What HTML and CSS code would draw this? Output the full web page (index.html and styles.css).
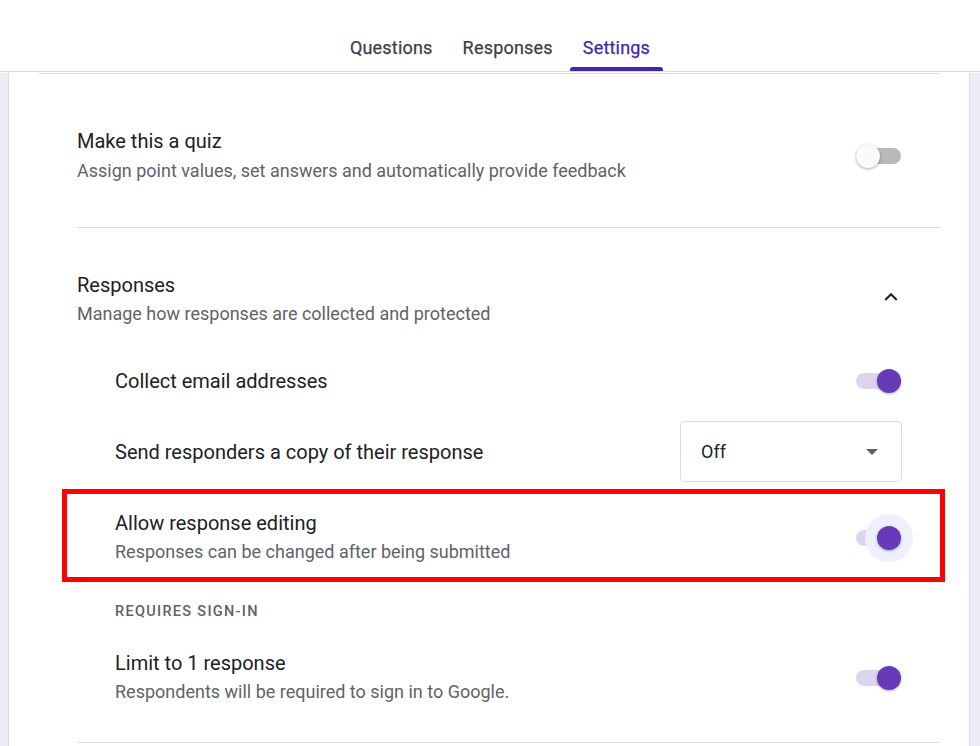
FILE: index.html
```html
<!DOCTYPE html>
<html>
<head>
<meta charset="utf-8">
<link rel="stylesheet" href="styles.css">
</head>
<body>
<header class="topbar">
  <nav class="tabs">
    <div class="tab">Questions</div>
    <div class="tab">Responses</div>
    <div class="tab active">Settings</div>
  </nav>
</header>
<main class="page">
  <div class="card">
    <div class="top-rule"></div>
    <section class="section quiz">
      <div class="row">
        <div class="text">
          <div class="title">Make this a quiz</div>
          <div class="sub">Assign point values, set answers and automatically provide feedback</div>
        </div>
        <span class="toggle off"><span class="thumb"></span></span>
      </div>
    </section>
    <section class="section responses">
      <div class="row head">
        <div class="text">
          <div class="title">Responses</div>
          <div class="sub sub-tight">Manage how responses are collected and protected</div>
        </div>
        <svg class="chevron" width="26" height="26" viewBox="0 0 24 24"><path d="M7.41 15.41 12 10.83l4.59 4.58L18 14l-6-6-6 6z" fill="#202124"/></svg>
      </div>
      <div class="subrow collect">
        <div class="title">Collect email addresses</div>
        <span class="toggle on"><span class="thumb"></span></span>
      </div>
      <div class="subrow send">
        <div class="title">Send responders a copy of their response</div>
        <div class="select">
          <span class="select-value">Off</span>
          <span class="select-arrow"></span>
        </div>
      </div>
      <div class="highlight">
        <div class="text">
          <div class="title">Allow response editing</div>
          <div class="sub sub-tight">Responses can be changed after being submitted</div>
        </div>
        <span class="toggle on focused"><span class="halo"></span><span class="thumb"></span></span>
      </div>
      <div class="label">REQUIRES SIGN-IN</div>
      <div class="subrow limit">
        <div class="text">
          <div class="title">Limit to 1 response</div>
          <div class="sub sub-tight">Respondents will be required to sign in to Google.</div>
        </div>
        <span class="toggle on"><span class="thumb"></span></span>
      </div>
    </section>
  </div>
</main>
</body>
</html>
```

FILE: styles.css
```css
* { box-sizing: border-box; }

html, body {
  margin: 0;
  padding: 0;
  background: #ffffff;
  font-family: Roboto, "Noto Sans", Arial, sans-serif;
  color: #202124;
  overflow: hidden;
}

.topbar {
  height: 72px;
  border-bottom: 1px solid #dadce0;
  background: #fff;
  display: flex;
  justify-content: center;
  align-items: flex-end;
}

.tabs {
  display: flex;
  gap: 4px;
  margin-left: 20px;
  height: 100%;
  align-items: stretch;
}

.tab {
  position: relative;
  display: flex;
  align-items: center;
  padding: 24px 13px 0;
  font-size: 18px;
  font-weight: 400;
  color: #3c4043;
  letter-spacing: 0.2px;
  -webkit-text-stroke: 0.25px currentColor;
}

.tab.active {
  color: #4527a0;
}

.tab.active::after {
  content: "";
  position: absolute;
  left: 0;
  right: 0;
  bottom: 0;
  height: 4px;
  background: #4527a0;
  border-radius: 3px 3px 0 0;
}

.page {
  background: #f0ebf8;
  padding: 0 10px 0 8px;
  min-height: 700px;
}

.card {
  background: #fff;
  border-left: 1px solid #dadce0;
  border-right: 1px solid #dadce0;
  min-height: 700px;
}

.top-rule {
  margin: 1px 29px 0 30px;
  height: 1px;
  background: #dadce0;
}

.section {
  margin: 0 29px 0 68px;
  border-bottom: 1px solid #dadce0;
}

.quiz {
  padding: 55px 0 44px;
}

.responses {
  padding: 45px 0 38px;
}

.row {
  display: flex;
  align-items: center;
  justify-content: space-between;
  padding-right: 39px;
}

.head {
  padding-right: 36px;
  align-items: flex-start;
}

.chevron {
  margin-top: 11px;
}

.title {
  font-size: 20px;
  line-height: 24px;
  color: #202124;
}

.sub {
  font-size: 18px;
  line-height: 24px;
  color: #5f6368;
  margin-top: 6px;
}

.sub-tight {
  margin-top: 5px;
}

.subrow {
  display: flex;
  align-items: center;
  justify-content: space-between;
  padding: 0 39px 0 38px;
}

.collect {
  margin-top: 43px;
  height: 24px;
}

.send {
  margin-top: 28px;
  height: 61px;
}

.select {
  width: 222px;
  height: 61px;
  border: 1px solid #dadce0;
  border-radius: 4px;
  display: flex;
  align-items: center;
  justify-content: space-between;
  padding: 0 23px 0 20px;
  margin-right: -1px;
}

.select-value {
  font-size: 18px;
  color: #202124;
}

.select-arrow {
  width: 0;
  height: 0;
  border-left: 6px solid transparent;
  border-right: 6px solid transparent;
  border-top: 6px solid #5f6368;
}

.highlight {
  margin: 7px -5px 0 -15px;
  border: 5px solid #ff0000;
  display: flex;
  align-items: center;
  justify-content: space-between;
  padding: 17px 39px 13px 48px;
  height: 93px;
}

.label {
  margin-top: 20px;
  padding-left: 38px;
  font-size: 14.5px;
  line-height: 20px;
  font-weight: 500;
  letter-spacing: 1.3px;
  color: #5f6368;
}

.limit {
  margin-top: 29px;
  align-items: center;
}

.toggle {
  position: relative;
  width: 45px;
  height: 24px;
  flex: none;
  display: inline-block;
}

.toggle::before {
  content: "";
  position: absolute;
  left: 0;
  right: 0;
  top: 4px;
  height: 16px;
  border-radius: 8px;
  background: #b9b9b9;
}

.toggle.on::before {
  background: #ddd5ef;
}

.thumb {
  position: absolute;
  top: 0;
  left: 0;
  width: 24px;
  height: 24px;
  border-radius: 50%;
  background: #fafafa;
  box-shadow: 0 1px 3px rgba(0,0,0,0.35);
}

.toggle.on .thumb {
  left: auto;
  right: 0;
  background: #673ab7;
  box-shadow: 0 1px 3px rgba(0,0,0,0.3);
}

.halo {
  position: absolute;
  right: -12px;
  top: -12px;
  width: 48px;
  height: 48px;
  border-radius: 50%;
  background: #eef1fb;
}
```
